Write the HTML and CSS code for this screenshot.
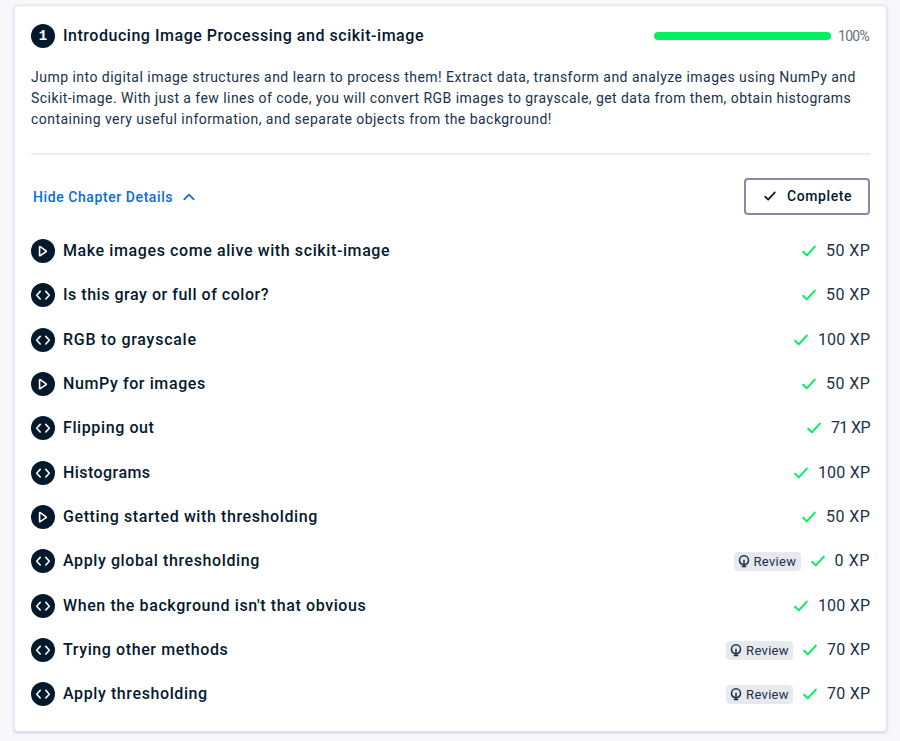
FILE: index.html
```
<!DOCTYPE html>
<html lang="en">
<head>
<meta charset="utf-8">
<title>Introducing Image Processing and scikit-image</title>
<link rel="stylesheet" href="styles.css">
</head>
<body>
<svg class="sprite" width="0" height="0">
  <symbol id="play" viewBox="0 0 24 24"><path d="M8.600 8v8.400c0 .3.3.5.6.3l5.900-4.100a.5.5 0 0 0 0-.8L9.200 7.700c-.3-.2-.6 0-.6.3z"/></symbol>
  <symbol id="code" viewBox="0 0 24 24"><path d="M9.200 8.400 5.700 12.200 9.200 16M14.800 8.400l3.500 3.800-3.500 3.800"/></symbol>
  <symbol id="check" viewBox="0 0 14 12"><path d="M1.200 6.800 4.800 10.400 12.800 1.600"/></symbol>
  <symbol id="bulb" viewBox="0 0 12 14"><path d="M3.800 10.200C2.300 9.500 1.500 8 1.500 6.200a4.500 4.500 0 0 1 9 0c0 1.800-.8 3.300-2.300 4M4.300 12.500h3.400M6 6.200v6M4.400 10.500h3.200"/></symbol>
</svg>
<main class="card">
  <header class="head">
    <span class="dot num">1</span>
    <h1 class="title">Introducing Image Processing and scikit-image</h1>
    <div class="bar"></div>
    <span class="percent">100%</span>
  </header>
  <p class="desc"><span class="d1">Jump into digital image structures and learn to process them! Extract data, transform and analyze images using NumPy and</span><br><span class="d2">Scikit-image. With just a few lines of code, you will convert RGB images to grayscale, get data from them, obtain histograms</span><br><span class="d3">containing very useful information, and separate objects from the background!</span></p>
  <div class="actions">
    <a class="toggle">Hide Chapter Details<svg class="chev" viewBox="0 0 12 8"><path d="M1.300 6.400 6 1.700l4.700 4.700"/></svg></a>
    <button class="complete"><svg class="check"><use href="#check"/></svg>Complete</button>
  </div>
  <ul class="list">
    <li><svg class="dot"><use href="#play"/></svg><span class="name">Make images come alive with scikit-image</span><svg class="check"><use href="#check"/></svg><span class="xp">50 XP</span></li>
    <li><svg class="dot"><use href="#code"/></svg><span class="name snug">Is this gray or full of color?</span><svg class="check"><use href="#check"/></svg><span class="xp">50 XP</span></li>
    <li><svg class="dot"><use href="#code"/></svg><span class="name loose">RGB to grayscale</span><svg class="check"><use href="#check"/></svg><span class="xp hundred">100 XP</span></li>
    <li><svg class="dot"><use href="#play"/></svg><span class="name">NumPy for images</span><svg class="check"><use href="#check"/></svg><span class="xp">50 XP</span></li>
    <li><svg class="dot"><use href="#code"/></svg><span class="name">Flipping out</span><svg class="check"><use href="#check"/></svg><span class="xp tight">71 XP</span></li>
    <li><svg class="dot"><use href="#code"/></svg><span class="name snugger">Histograms</span><svg class="check"><use href="#check"/></svg><span class="xp hundred">100 XP</span></li>
    <li><svg class="dot"><use href="#play"/></svg><span class="name">Getting started with thresholding</span><svg class="check"><use href="#check"/></svg><span class="xp">50 XP</span></li>
    <li><svg class="dot"><use href="#code"/></svg><span class="name">Apply global thresholding</span><span class="review"><svg class="bulb"><use href="#bulb"/></svg>Review</span><svg class="check"><use href="#check"/></svg><span class="xp wide">0 XP</span></li>
    <li><svg class="dot"><use href="#code"/></svg><span class="name">When the background isn't that obvious</span><svg class="check"><use href="#check"/></svg><span class="xp hundred">100 XP</span></li>
    <li><svg class="dot"><use href="#code"/></svg><span class="name">Trying other methods</span><span class="review"><svg class="bulb"><use href="#bulb"/></svg>Review</span><svg class="check"><use href="#check"/></svg><span class="xp hundred">70 XP</span></li>
    <li><svg class="dot"><use href="#code"/></svg><span class="name">Apply thresholding</span><span class="review"><svg class="bulb"><use href="#bulb"/></svg>Review</span><svg class="check"><use href="#check"/></svg><span class="xp hundred">70 XP</span></li>
  </ul>
</main>
</body>
</html>
```
FILE: styles.css
```
* { box-sizing: border-box; }
body { margin: 0; padding: 5px 13px 0 14px; height: 741px; background: #f7f7fc; color: #05192d; font-family: Roboto, "Liberation Sans", sans-serif; overflow: hidden; }
svg { fill: none; stroke-linecap: round; stroke-linejoin: round; flex: none; }
.sprite { display: block; position: absolute; }
.card { width: 873px; height: 727px; padding: 17px 16px 0; background: #fff; border: 1px solid #e3e4ee; border-radius: 4px; box-shadow: 0 1px 3px #c9cbdc; }
.head { display: flex; align-items: center; height: 25px; }
.dot { width: 24px; height: 24px; border-radius: 50%; background: #05192d; stroke: #fff; stroke-width: 1.600; flex: none; }
.num { color: #fff; font: 700 14px/24px "Liberation Mono", monospace; text-align: center; }
.title { margin: 0 auto 0 8px; font-size: 16px; line-height: 24px; font-weight: 500; letter-spacing: .53px; white-space: nowrap; }
.bar { width: 177px; height: 8px; border-radius: 4px; background: #03ef62; }
.percent { width: 32px; margin: 0 0 0 7px; font-size: 14px; line-height: 20px; color: #65707c; white-space: nowrap; letter-spacing: -.7px; }
.desc { margin: 19px 0 0; height: 88px; border-bottom: 2px solid #ececf2; font-size: 14px; line-height: 21px; white-space: nowrap; color: #213147; }
.d1 { letter-spacing: .475px; }
.d2 { letter-spacing: .445px; }
.d3 { letter-spacing: .46px; }
.actions { display: flex; justify-content: space-between; align-items: center; height: 37px; margin-top: 23px; }
.toggle { display: flex; align-items: center; margin-left: 2px; color: #0b6cd6; font-size: 14px; line-height: 20px; font-weight: 500; letter-spacing: .58px; }
.chev { width: 12px; height: 8px; margin-left: 9.500px; stroke: currentColor; stroke-width: 1.700; }
.complete { display: flex; align-items: center; width: 126px; height: 37px; padding: 0 0 1px 18px; border: 2px solid #848aa8; border-radius: 4px; background: #fff; color: #05192d; font: 500 14px/20px Roboto, sans-serif; letter-spacing: .6px; }
.check { width: 14px; height: 12px; stroke: #03ef62; stroke-width: 2; }
.complete .check { width: 12px; height: 10px; margin-right: 11px; stroke: #05192d; }
.list { list-style: none; margin: 14px 0 0; padding: 0; }
.list li { display: flex; align-items: center; height: 44.330px; }
.name { margin: 0 auto 0 8px; font-size: 16px; line-height: 24px; font-weight: 500; letter-spacing: .6px; white-space: nowrap; }
.snug { letter-spacing: .53px; }
.snugger { letter-spacing: .44px; }
.loose { letter-spacing: .74px; }
.xp { margin: 0 -.4px 0 10px; font-size: 16px; line-height: 24px; letter-spacing: .45px; color: #213147; white-space: nowrap; }
.hundred { margin-right: -.2px; letter-spacing: .2px; }
.wide { margin-right: 0; letter-spacing: .6px; }
.tight { margin-right: 0; letter-spacing: -.6px; }
.review { display: flex; align-items: center; width: 67px; height: 19px; margin-right: 10px; padding-left: 4px; border-radius: 4px; background: #e8e8ef; color: #213147; font-size: 13px; letter-spacing: .3px; }
.bulb { width: 12px; height: 14px; margin-right: 4px; stroke: #213147; stroke-width: 1.500; }
```
